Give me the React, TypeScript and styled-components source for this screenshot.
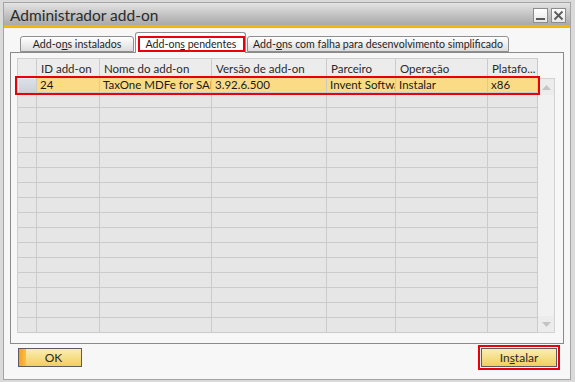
import React from "react";
import styled, { createGlobalStyle } from "styled-components";

const Global = createGlobalStyle`
  html, body { margin: 0; padding: 0; background: #d9d9d9; }
  body { font-family: Lato, "Open Sans", Arial, sans-serif; }
  * { box-sizing: border-box; }
`;

const Frame = styled.div`
  width: 575px;
  height: 382px;
  padding: 2px 4px 2px 3px;
  background: #dadada;
`;

const Inner = styled.div`
  height: 100%;
  border: 1px solid #a4a4a4;
  background: #f7f7f7;
  display: flex;
  flex-direction: column;
`;

const TitleBar = styled.div`
  height: 25px;
  display: flex;
  align-items: center;
  justify-content: space-between;
  padding: 0 4px 0 6px;
  background: linear-gradient(#e4e4e4, #c2c2c2 55%, #a9a9a9);
  border-bottom: 3px solid #f2b700;
`;

const Title = styled.div`
  font-size: 15.5px;
  color: #2b2b2b;
  margin-top: 1px;
`;

const WinButtons = styled.div`
  display: flex;
  gap: 3px;
  margin-top: 3px;
`;

const WinButton = styled.div`
  width: 15px;
  height: 15px;
  border: 1px solid #8c8c8c;
  background: linear-gradient(#ffffff, #e6e6e6);
  display: flex;
  align-items: center;
  justify-content: center;
`;

const Body = styled.div`
  flex: 1;
  display: flex;
  flex-direction: column;
  padding: 0 6px;
`;

const TabStrip = styled.div`
  height: 24px;
  display: flex;
  align-items: flex-end;
  padding-left: 10px;
  gap: 1px;
  position: relative;
  z-index: 1;
`;

const Tab = styled.div<{ $active?: boolean; $w: number }>`
  width: ${(p) => p.$w}px;
  height: ${(p) => (p.$active ? 21 : 16)}px;
  margin-bottom: ${(p) => (p.$active ? -1 : 0)}px;
  border: 1px solid #8f8f8f;
  border-bottom: ${(p) => (p.$active ? "none" : "1px solid #8f8f8f")};
  border-radius: 3px 3px 0 0;
  background: ${(p) =>
    p.$active ? "#ffffff" : "linear-gradient(#ffffff, #eaeaea 60%, #dcdcdc)"};
  font-size: 10.6px;
  color: #1e1e1e;
  display: flex;
  align-items: ${(p) => (p.$active ? "flex-end" : "center")};
  justify-content: center;
  padding-bottom: ${(p) => (p.$active ? 1 : 0)}px;
  white-space: nowrap;
`;

const ActiveLabel = styled.div`
  width: 107px;
  height: 16px;
  margin-left: 1px;
  display: flex;
  align-items: center;
  justify-content: center;
  outline: 2px solid #e8000b;
  outline-offset: -2px;
`;

const Mn = styled.span`
  text-decoration: underline;
`;

const Panel = styled.div`
  height: 292px;
  border: 1px solid #8a8a8a;
  background: #f7f7f7;
  padding: 5px 0 0 6px;
`;

const Grid = styled.div`
  width: 538px;
  display: flex;
  flex-direction: column;
`;

const HeaderRow = styled.div`
  display: flex;
  height: 20px;
  width: 521px;
`;

const HeadCell = styled.div<{ $w: number }>`
  width: ${(p) => p.$w}px;
  flex: none;
  background: #ececec;
  border-top: 1px solid #cfcfcf;
  border-right: 1px solid #cbcbcb;
  border-bottom: 1px solid #cbcbcb;
  &:first-child { border-left: 1px solid #cfcfcf; }
  font-size: 11.5px;
  color: #2a2a2a;
  padding-left: 4px;
  display: flex;
  align-items: center;
  white-space: nowrap;
  overflow: hidden;
`;

const GridBody = styled.div`
  display: flex;
`;

const Rows = styled.div`
  width: 521px;
  display: flex;
  flex-direction: column;
`;

const Row = styled.div<{ $selected?: boolean }>`
  display: flex;
  height: 15px;
  ${(p) =>
    p.$selected
      ? "outline: 2px solid #e8000b; outline-offset: 0px; position: relative; z-index: 1;"
      : ""}
`;

const Cell = styled.div<{ $w: number; $selected?: boolean; $rowHead?: boolean }>`
  width: ${(p) => p.$w}px;
  flex: none;
  background: ${(p) =>
    p.$rowHead
      ? p.$selected
        ? "linear-gradient(#dde1e8, #cdd1da)"
        : "#e6e6e6"
      : p.$selected
      ? "#fcdb87"
      : "#e6e6e6"};
  border-right: 1px solid #cbcbcb;
  border-bottom: 1px solid #cbcbcb;
  &:first-child { border-left: 1px solid #cfcfcf; }
  ${(p) => (p.$rowHead && p.$selected ? "box-shadow: inset 1px 1px 0 #eef0f4;" : "")}
  font-size: 11.5px;
  color: #1a1a1a;
  padding-left: 3px;
  line-height: 14px;
  white-space: nowrap;
  overflow: hidden;
`;

const ScrollBar = styled.div`
  width: 17px;
  height: 255px;
  background: #f1f1f1;
  border: 1px solid #d2d2d2;
  border-left: none;
  display: flex;
  flex-direction: column;
  justify-content: space-between;
`;

const ScrollArrow = styled.div`
  height: 16px;
  display: flex;
  align-items: center;
  justify-content: center;
  background: #ececec;
`;

const ButtonRow = styled.div`
  display: flex;
  justify-content: space-between;
  padding: 4px 7px 0 8px;
`;

const Button = styled.div<{ $w: number; $stripe?: boolean; $outlined?: boolean }>`
  width: ${(p) => p.$w}px;
  height: 19px;
  border: 1px solid #5c5c5c;
  background: ${(p) =>
    p.$stripe
      ? "linear-gradient(90deg, #f6a019 0, #f7c04a 7px, transparent 7px), linear-gradient(#fbecb6, #f6df88 50%, #f1cf5f)"
      : "linear-gradient(#fbecb6, #f6df88 50%, #f1cf5f)"};
  font-size: 12px;
  color: #2a2a2a;
  display: flex;
  align-items: center;
  justify-content: center;
  padding-left: ${(p) => (p.$stripe ? 7 : 0)}px;
  ${(p) => (p.$outlined ? "outline: 2px solid #e8000b; outline-offset: 1px;" : "")}
`;

const cols = [20, 63, 112, 115, 69, 92, 50];
const heads = ["", "ID add-on", "Nome do add-on", "Versão de add-on", "Parceiro", "Operação", "Platafo..."];
const data = ["", "24", "TaxOne MDFe for SAP S", "3.92.6.500", "Invent Software", "Instalar", "x86"];

export default function App() {
  return (
    <>
      <Global />
      <Frame>
        <Inner>
          <TitleBar>
            <Title>Administrador add-on</Title>
            <WinButtons>
              <WinButton>
                <svg width="11" height="11" viewBox="0 0 11 11">
                  <rect x="1" y="8" width="9" height="2" fill="#5a5a5a" />
                </svg>
              </WinButton>
              <WinButton>
                <svg width="11" height="11" viewBox="0 0 11 11">
                  <path d="M1.5 1.5 L9.5 9.5 M9.5 1.5 L1.5 9.5" stroke="#5a5a5a" strokeWidth="1.8" />
                </svg>
              </WinButton>
            </WinButtons>
          </TitleBar>
          <Body>
            <TabStrip>
              <Tab $w={114}>
                <span>Add-o<Mn>n</Mn>s instalados</span>
              </Tab>
              <Tab $w={111} $active>
                <ActiveLabel>
                  <span>Add-on<Mn>s</Mn> pendentes</span>
                </ActiveLabel>
              </Tab>
              <Tab $w={262}>
                <span>Add-<Mn>o</Mn>ns com falha para desenvolvimento simplificado</span>
              </Tab>
            </TabStrip>
            <Panel>
              <Grid>
                <HeaderRow>
                  {heads.map((h, i) => (
                    <HeadCell key={i} $w={cols[i]}>{h}</HeadCell>
                  ))}
                </HeaderRow>
                <GridBody>
                  <Rows>
                    <Row $selected>
                      {data.map((d, i) => (
                        <Cell key={i} $w={cols[i]} $selected $rowHead={i === 0}>{d}</Cell>
                      ))}
                    </Row>
                    {Array.from({ length: 16 }).map((_, r) => (
                      <Row key={r}>
                        {cols.map((w, i) => (
                          <Cell key={i} $w={w} $rowHead={i === 0} />
                        ))}
                      </Row>
                    ))}
                  </Rows>
                  <ScrollBar>
                    <ScrollArrow>
                      <svg width="9" height="5" viewBox="0 0 9 5">
                        <path d="M0 5 L4.5 0 L9 5 Z" fill="#c4c4c4" />
                      </svg>
                    </ScrollArrow>
                    <ScrollArrow>
                      <svg width="9" height="5" viewBox="0 0 9 5">
                        <path d="M0 0 L4.5 5 L9 0 Z" fill="#c4c4c4" />
                      </svg>
                    </ScrollArrow>
                  </ScrollBar>
                </GridBody>
              </Grid>
            </Panel>
            <ButtonRow>
              <Button $w={64} $stripe>OK</Button>
              <Button $w={76} $outlined>
                <span>In<Mn>s</Mn>talar</span>
              </Button>
            </ButtonRow>
          </Body>
        </Inner>
      </Frame>
    </>
  );
}
